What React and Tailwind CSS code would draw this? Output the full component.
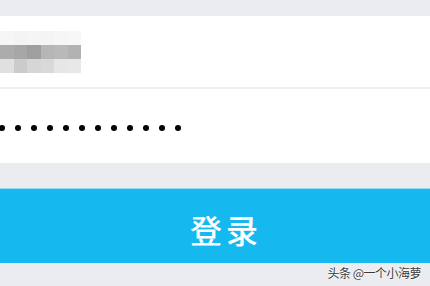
import React from 'react';

const blurRows = [
  ['#f6f6f6', '#f4f4f4', '#f5f5f5', '#f4f4f4', '#f6f6f6', '#f7f7f7'],
  ['#acacac', '#a7a7a7', '#9f9f9f', '#b6b6b6', '#b9b9b9', '#b2b2b2'],
  ['#e0e0e0', '#cbcbcb', '#d6d6d6', '#d9d9d9', '#e6e6e6', '#e8e8e8'],
];

export default function App() {
  return (
    <div
      className="w-[430px] h-[286px] overflow-hidden bg-[#ebecf0] pt-[16px]"
      style={{ fontFamily: '"Noto Sans CJK SC", "Noto Sans", sans-serif' }}
    >
      <div className="bg-white">
        <div className="h-[73px] flex items-center border-b-2 border-[#eeeff2]">
          <div className="flex flex-col mt-[1px]">
            {blurRows.map((row, r) => (
              <div key={r} className="flex h-[14px]">
                {row.map((c, i) => (
                  <div key={i} className="w-[13.5px] h-full" style={{ backgroundColor: c }} />
                ))}
              </div>
            ))}
          </div>
        </div>
        <div className="h-[74px] flex items-center">
          <div className="flex gap-[10px] -ml-[1px] mt-[3px]">
            {Array.from({ length: 12 }).map((_, i) => (
              <span key={i} className="w-[6px] h-[6px] rounded-full bg-black" />
            ))}
          </div>
        </div>
      </div>

      <div className="mt-[25px] h-[75px] bg-[#15b9f0] border-t border-[#8fdaf5] flex items-center justify-center">
        <span className="text-white text-[32px] font-medium tracking-[4px] leading-none mt-[6px] ml-[22px]">登录</span>
      </div>

      <div className="flex justify-end pr-[9px]">
        <span
          className="text-[12px] leading-[20px] text-[#3a3a3a] tracking-[-0.5px]"
          style={{ textShadow: '0 0 2px #fff, 0 0 2px #fff' }}
        >
          头条 @一个小海萝
        </span>
      </div>
    </div>
  );
}
